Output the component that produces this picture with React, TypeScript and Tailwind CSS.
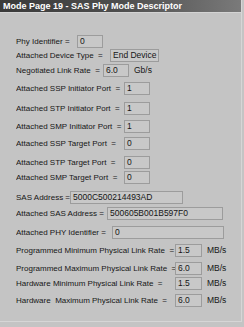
const rows = [
  { label: "Phy Identifier =", value: "0", x: 77, w: 26, mt: 23, unit: "" },
  { label: "Attached Device Type  =", value: "End Device", x: 110, w: 49, mt: 1, unit: "" },
  { label: "Negotiated Link Rate  =", value: "6.0", x: 103, w: 26, mt: 2, unit: "Gb/s" },
  { label: "Attached SSP Initiator Port  =", value: "1", x: 124, w: 26, mt: 5, unit: "" },
  { label: "Attached STP Initiator Port  =", value: "1", x: 124, w: 26, mt: 7, unit: "" },
  { label: "Attached SMP Initiator Port  =", value: "1", x: 124, w: 26, mt: 5, unit: "" },
  { label: "Attached SSP Target Port  =", value: "0", x: 124, w: 26, mt: 4, unit: "" },
  { label: "Attached STP Target Port  =", value: "0", x: 124, w: 26, mt: 6, unit: "" },
  { label: "Attached SMP Target Port  =", value: "0", x: 124, w: 26, mt: 2, unit: "" },
  { label: "SAS Address =", value: "5000C500214493AD", x: 70, w: 113, mt: 7, unit: "" },
  { label: "Attached SAS Address =", value: "500605B001B597F0", x: 107, w: 116, mt: 3, unit: "" },
  { label: "Attached PHY Identifier =", value: "0", x: 112, w: 112, mt: 6, unit: "" },
  { label: "Programmed Minimum Physical Link Rate  =", value: "1.5", x: 175, w: 27, mt: 5, unit: "MB/s" },
  { label: "Programmed Maximum Physical Link Rate  =", value: "6.0", x: 175, w: 27, mt: 5, unit: "MB/s" },
  { label: "Hardware Minimum Physical Link Rate  =", value: "1.5", x: 175, w: 27, mt: 2, unit: "MB/s" },
  { label: "Hardware  Maximum Physical Link Rate  =", value: "6.0", x: 175, w: 27, mt: 4, unit: "MB/s" },
];

export default function App() {
  return (
    <div
      className="w-[244px] h-[327px] bg-[#c4c4c4] overflow-hidden text-[#161616]"
      style={{ fontFamily: '"Liberation Sans", Arial, sans-serif' }}
    >
      <div className="h-[322px] w-[242px] border-r border-b border-[#d6d6d6]">
        <div className="h-[13px] bg-gradient-to-r from-[#3a3a3a] via-[#4e4e4e] to-[#7a7a7a] border-b border-[#d4d4d4] flex items-center pl-[3px] overflow-hidden">
          <span className="text-white font-bold text-[9px] leading-none whitespace-nowrap">
            Mode Page 19 - SAS Phy Mode Descriptor
          </span>
        </div>

        <div className="flex flex-col pl-[16px] -mt-[1px]">
          {rows.map((r) => (
            <div
              key={r.label}
              className="flex items-center h-[13px]"
              style={{ marginTop: r.mt }}
            >
              <span
                className="shrink-0 whitespace-pre text-[8px] leading-none overflow-hidden"
                style={{ width: r.x - 16 }}
              >
                {r.label}
              </span>
              <div
                className="h-[13px] shrink-0 border border-[#9c9c9c] bg-[#c8c8c8] flex items-center pl-[2px] text-[8.5px] leading-none whitespace-nowrap"
                style={{ width: r.w }}
              >
                {r.value}
              </div>
              {r.unit && (
                <span className="ml-[5px] text-[8.5px] leading-none whitespace-nowrap">{r.unit}</span>
              )}
            </div>
          ))}
        </div>
      </div>
    </div>
  );
}
